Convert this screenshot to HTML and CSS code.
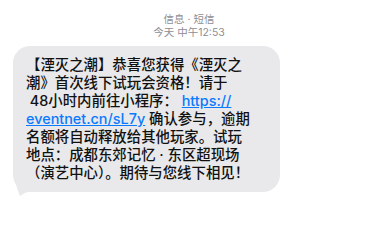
FILE: index.html
```html
<!DOCTYPE html>
<html lang="zh-CN">
<head>
  <meta charset="UTF-8">
  <title>信息</title>
  <meta name="viewport" content="width=device-width, initial-scale=1">
  <link rel="stylesheet" href="styles.css">
</head>
<body>

<div class="thread">
  <div class="meta">
    <div>信息 · 短信</div>
    <div>今天 中午12:53</div>
  </div>

  <div class="bubble">
    <p class="text">【湮灭之潮】恭喜您获得《湮灭之<br>潮》首次线下试玩会资格！请于<br>&nbsp;48小时内前往小程序：&nbsp;<a href="#">https://</a><br><a href="#">eventnet.cn/sL7y</a> 确认参与，逾期<br>名额将自动释放给其他玩家。试玩<br>地点：成都东郊记忆 · 东区超现场<br>（演艺中心）。期待与您线下相见！</p>
    <svg class="tail" width="30" height="24" viewBox="0 0 30 24">
      <path d="M2.6 0 L2.6 8 C3.5 14 6 19 7 22 C11 19 17 16 28 16 L28 0 Z" fill="#e9e9eb"/>
    </svg>
  </div>
</div>

</body>
</html>
```

FILE: styles.css
```css
* {
  box-sizing: border-box;
}

body {
  margin: 0;
  background: #ffffff;
  font-family: Inter, "Noto Sans CJK SC", sans-serif;
  width: 372px;
  height: 244px;
  overflow: hidden;
}

.thread {
  padding: 12px 0 0 13px;
}

.meta {
  width: 352px;
  text-align: center;
  font-size: 10.5px;
  line-height: 13px;
  color: #8e8e93;
  margin: 1px 0 7px;
}

.bubble {
  position: relative;
  width: 267px;
  background: #e9e9eb;
  border-radius: 17px;
  padding: 10px 0 10px 13px;
}

.text {
  margin: 0;
  font-size: 14.4px;
  font-weight: 500;
  line-height: 18px;
  color: #111111;
  white-space: nowrap;
  position: relative;
  z-index: 1;
}

.text a {
  color: #0a7aff;
  text-decoration: underline;
}

.tail {
  position: absolute;
  left: 0;
  bottom: -6px;
}
```
